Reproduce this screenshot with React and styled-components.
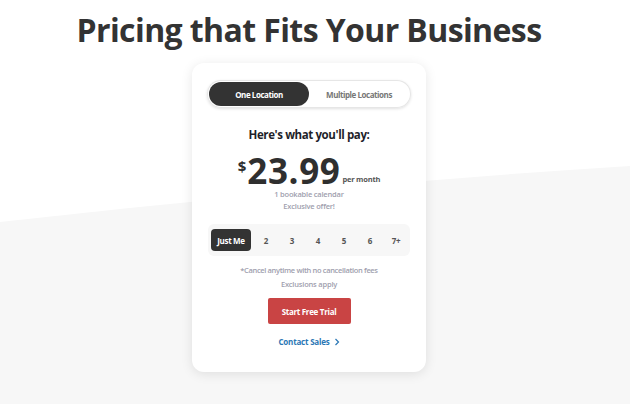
import React, { useState } from "react";
import styled, { createGlobalStyle } from "styled-components";

const Global = createGlobalStyle`
  html, body { margin: 0; padding: 0; background: #fff; }
  body { font-family: "Open Sans", "Liberation Sans", sans-serif; }
  * { box-sizing: border-box; }
`;

const Page = styled.div`
  position: relative;
  width: 630px;
  height: 404px;
  overflow: hidden;
  background: #fff;
`;

const Wave = styled.svg`
  position: absolute;
  left: 0;
  top: 0;
  width: 630px;
  height: 404px;
  z-index: 0;
`;

const Content = styled.div`
  position: relative;
  z-index: 1;
  display: flex;
  flex-direction: column;
  align-items: center;
  padding: 9px 12px 0 0;
`;

const Title = styled.h1`
  margin: 0;
  font-family: "Open Sans", sans-serif;
  font-weight: 700;
  font-size: 32px;
  line-height: 42px;
  letter-spacing: -0.6px;
  color: #333;
`;

const Card = styled.div`
  margin-top: 12px;
  width: 234px;
  background: #fff;
  border-radius: 12px;
  box-shadow: 0 2px 12px rgba(0, 0, 0, 0.1);
  padding: 17px 15px 24px;
  display: flex;
  flex-direction: column;
  align-items: center;
`;

const Toggle = styled.div`
  width: 204px;
  height: 28px;
  border-radius: 14px;
  background: #fff;
  box-shadow: inset 0 0 0 1px #e6e6e6, 0 1px 3px rgba(0,0,0,0.12);
  padding: 2px;
  display: grid;
  grid-template-columns: 100px 1fr;
`;

const ToggleOpt = styled.button`
  border: none;
  border-radius: 12px;
  font-family: "Open Sans", sans-serif;
  font-size: 8px;
  font-weight: 700;
  letter-spacing: -0.45px;
  cursor: pointer;
  background: ${p => (p.$active ? "#333" : "transparent")};
  color: ${p => (p.$active ? "#fff" : "#777")};
  padding: 0;
`;

const Heading = styled.div`
  margin-top: 20px;
  font-size: 11.5px;
  line-height: 14px;
  font-weight: 700;
  color: #1f1f2a;
  letter-spacing: -0.4px;
`;

const PriceRow = styled.div`
  margin-top: 14px;
  display: flex;
  align-items: flex-end;
  color: #2f2f2f;
  height: 30px;
`;

const Dollar = styled.span`
  font-size: 15px;
  font-weight: 700;
  align-self: flex-start;
  line-height: 14px;
  margin-top: 3px;
  margin-right: 1px;
`;

const Amount = styled.span`
  font-size: 35px;
  font-weight: 700;
  line-height: 30px;
  letter-spacing: 0.6px;
`;

const Per = styled.span`
  font-size: 7.5px;
  line-height: 10px;
  font-weight: 700;
  color: #555;
  margin-left: 2px;
  margin-bottom: 2px;
  letter-spacing: -0.2px;
`;

const Note = styled.div`
  font-size: 7.5px;
  font-weight: 600;
  color: #a0a0ae;
  line-height: 12px;
  letter-spacing: ${p => p.$ls ?? -0.2}px;
  margin-top: ${p => p.$mt || 0}px;
`;

const Seg = styled.div`
  margin-top: 12px;
  width: 202px;
  height: 32px;
  background: #f7f7f7;
  border-radius: 6px;
  display: flex;
  align-items: center;
  padding: 0 1px 0 3px;
`;

const SegItem = styled.button`
  border: none;
  height: 22px;
  border-radius: 4px;
  padding: 0;
  font-family: "Open Sans", sans-serif;
  font-size: 8px;
  font-weight: 700;
  letter-spacing: -0.3px;
  cursor: pointer;
  background: ${p => (p.$active ? "#333" : "transparent")};
  color: ${p => (p.$active ? "#fff" : "#555")};
  flex: ${p => (p.$wide ? "0 0 40px" : "1")};
  margin-right: ${p => (p.$wide ? "2px" : "0")};
`;

const Trial = styled.button`
  margin-top: 8px;
  width: 83px;
  height: 26px;
  border: none;
  border-radius: 2px;
  background: #c94444;
  color: #fff;
  font-family: "Open Sans", sans-serif;
  font-size: 8px;
  font-weight: 700;
  letter-spacing: -0.3px;
`;

const Contact = styled.a`
  margin-top: 12px;
  display: flex;
  align-items: center;
  gap: 4px;
  color: #2b77b5;
  font-size: 8px;
  line-height: 12px;
  font-weight: 700;
  letter-spacing: -0.2px;
  text-decoration: none;
`;

export default function App() {
  const [loc, setLoc] = useState(0);
  const [size, setSize] = useState(0);
  const sizes = ["Just Me", "2", "3", "4", "5", "6", "7+"];
  return (
    <Page>
      <Global />
      <Wave viewBox="0 0 630 404" preserveAspectRatio="none">
        <path d="M0 222 Q315 186 630 166 L630 404 L0 404 Z" fill="#f7f7f7" />
      </Wave>
      <Content>
        <Title>Pricing that Fits Your Business</Title>
        <Card>
          <Toggle>
            <ToggleOpt $active={loc === 0} onClick={() => setLoc(0)}>One Location</ToggleOpt>
            <ToggleOpt $active={loc === 1} onClick={() => setLoc(1)}>Multiple Locations</ToggleOpt>
          </Toggle>
          <Heading>Here's what you'll pay:</Heading>
          <PriceRow>
            <Dollar>$</Dollar>
            <Amount>23.99</Amount>
            <Per>per month</Per>
          </PriceRow>
          <Note $mt={2}>1 bookable calendar</Note>
          <Note>Exclusive offer!</Note>
          <Seg>
            {sizes.map((s, i) => (
              <SegItem key={s} $wide={i === 0} $active={size === i} onClick={() => setSize(i)}>{s}</SegItem>
            ))}
          </Seg>
          <Note $mt={8} $ls={-0.35}>*Cancel anytime with no cancellation fees</Note>
          <Note $mt={2}>Exclusions apply</Note>
          <Trial>Start Free Trial</Trial>
          <Contact href="#">
            Contact Sales
            <svg width="6" height="8" viewBox="0 0 6 8">
              <path d="M1.5 1 L4.5 4 L1.5 7" fill="none" stroke="#2b77b5" strokeWidth="1.2" />
            </svg>
          </Contact>
        </Card>
      </Content>
    </Page>
  );
}
